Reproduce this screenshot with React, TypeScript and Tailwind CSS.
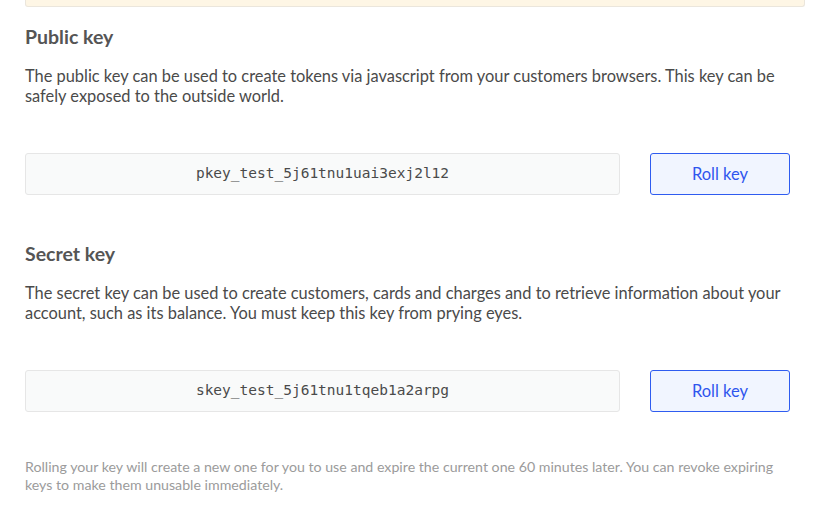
const keys = [
  {
    title: "Public key",
    text: "The public key can be used to create tokens via javascript from your customers browsers. This key can be safely exposed to the outside world.",
    value: "pkey_test_5j61tnu1uai3exj2l12",
  },
  {
    title: "Secret key",
    text: "The secret key can be used to create customers, cards and charges and to retrieve information about your account, such as its balance. You must keep this key from prying eyes.",
    value: "skey_test_5j61tnu1tqeb1a2arpg",
  },
];

export default function App() {
  return (
    <div className="min-h-[521px] w-[821px] bg-white font-['Lato',sans-serif] text-[#4a4a4a]">
      <div className="ml-[25px] mr-[16px] h-[7px] rounded-b-[3px] border-x border-b border-[#ebe6dc] bg-[#fef6e5]" />
      <div className="pl-[25px] pr-[31px]">
        {keys.map((k, i) => (
          <section key={k.title} className={i === 0 ? "pt-[18px]" : "pt-[47px]"}>
            <h2 className="text-[19.5px] font-bold leading-[24px] text-[#555]">{k.title}</h2>
            <p className="mt-[17px] text-[16.4px] leading-[20px]">{k.text}</p>
            <div className="mt-[47px] flex items-center gap-[30px]">
              <div className="flex h-[42px] w-[595px] items-center justify-center rounded-[3px] border border-[#e6e6e6] bg-[#f9fafa] font-['DejaVu_Sans_Mono',monospace] text-[14.5px] text-[#4a4a4a]">
                {k.value}
              </div>
              <button className="h-[42px] w-[140px] rounded-[3px] border border-[#2f5cf0] bg-[#f1f5ff] text-[16.5px] text-[#2f55ee]">
                Roll key
              </button>
            </div>
          </section>
        ))}
        <p className="mt-[46px] text-[14.2px] leading-[18px] text-[#9b9b9b]">
          Rolling your key will create a new one for you to use and expire the current one 60 minutes later. You can revoke expiring keys to make them unusable immediately.
        </p>
      </div>
    </div>
  );
}
